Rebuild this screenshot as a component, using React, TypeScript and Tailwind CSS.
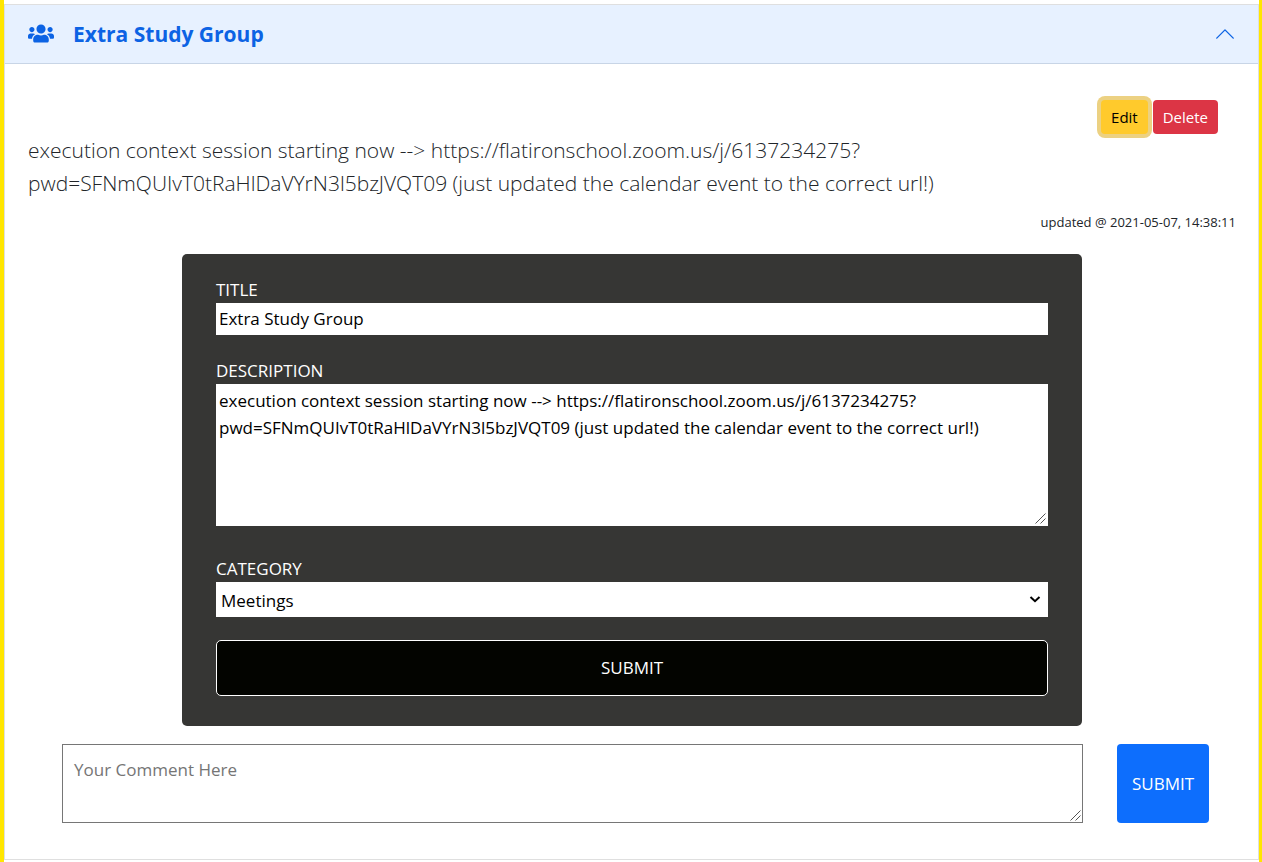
import { useState } from "react";
import type { TextareaHTMLAttributes } from "react";
import { FaUsers } from "react-icons/fa";
import { BsChevronUp } from "react-icons/bs";

const post = {
  title: "Extra Study Group",
  description:
    "execution context session starting now --> https://flatironschool.zoom.us/j/6137234275?pwd=SFNmQUIvT0tRaHlDaVYrN3l5bzJVQT09 (just updated the calendar event to the correct url!)",
  updated: "2021-05-07, 14:38:11",
};

function TextArea({ className, ...rest }: TextareaHTMLAttributes<HTMLTextAreaElement>) {
  return (
    <div className="relative flex min-w-0 grow">
      <textarea
        className={`w-full resize-y bg-white text-[17px] leading-[27px] outline-none [&::-webkit-resizer]:bg-transparent ${className}`}
        {...rest}
      />
      <svg
        className="pointer-events-none absolute right-0.5 bottom-0.5 size-[11px]"
        viewBox="0 0 11 11"
        fill="none"
        stroke="#555"
        aria-hidden="true"
      >
        <path d="M0.5 10.5 10.5 0.5M5.5 10.5 10.5 5.5" />
      </svg>
    </div>
  );
}

function EditForm() {
  const [title, setTitle] = useState(post.title);
  const [description, setDescription] = useState(post.description);
  return (
    <form
      className="mx-auto flex w-full max-w-[900px] flex-col rounded-[5px] bg-[#363634] px-[34px] pt-[22px] pb-[30px] text-[17px] leading-[27px] text-white"
      onSubmit={(e) => e.preventDefault()}
    >
      <label htmlFor="title">TITLE</label>
      <input
        id="title"
        className="h-8 w-full bg-white px-[3px] pb-0.5 text-black outline-none"
        value={title}
        onChange={(e) => setTitle(e.target.value)}
      />
      <label htmlFor="description" className="mt-[22px]">DESCRIPTION</label>
      <TextArea
        id="description"
        className="h-[142px] px-[3px] py-[3px] text-black"
        value={description}
        onChange={(e) => setDescription(e.target.value)}
      />
      <label htmlFor="category" className="mt-[29px]">CATEGORY</label>
      <div className="relative flex">
        <select id="category" className="h-[35px] w-full appearance-none bg-white pt-0.5 pl-[5px] text-black outline-none">
          <option>Meetings</option>
        </select>
        <svg
          className="pointer-events-none absolute top-[14px] right-[7px] h-[7px] w-3"
          viewBox="0 0 12 7"
          fill="none"
          stroke="#000"
          strokeWidth="2"
          aria-hidden="true"
        >
          <path d="M1.5 1 6 5.2 10.5 1" />
        </svg>
      </div>
      <button type="submit" className="mt-[23px] h-14 w-full rounded-[5px] border border-white bg-[#030400] pb-0.5">
        SUBMIT
      </button>
    </form>
  );
}

export default function App() {
  return (
    <div className="min-h-screen border-r-[3px] border-l-4 border-[#ffe600] bg-white pt-1 font-['Open_Sans','Noto_Sans',sans-serif] text-[#212529]">
      <section className="border border-[#dfdfdf]">
        <h2>
          <button
            type="button"
            aria-expanded="true"
            className="flex h-[59px] w-full items-center border-b border-[#c8d5e6] bg-[#e7f1ff] px-[22px] text-left text-[21px] font-bold text-[#0c63e4]"
          >
            <FaUsers className="mr-[19px] mb-0.5 ml-px h-[21px] w-[26px]" aria-hidden="true" />
            <span className="grow pt-0.5">{post.title}</span>
            <BsChevronUp className="size-[22px]" aria-hidden="true" />
          </button>
        </h2>
        <div className="pt-9 pr-[22px] pb-9 pl-[23px]">
          <div className="mr-[18px] flex justify-end gap-[5px] text-[15px] leading-[34px]">
            <button type="button" className="h-[34px] rounded bg-[#ffca2c] px-[10px] text-black ring-4 ring-[#ecd182]">
              Edit
            </button>
            <button type="button" className="h-[34px] rounded bg-[#dc3545] px-[10px] text-white">
              Delete
            </button>
          </div>
          <p className="text-[21px] leading-[33px] font-light break-words">{post.description}</p>
          <p className="mt-[10px] mb-5 text-right text-[13px] leading-6">updated @ {post.updated}</p>
          <EditForm />
          <form className="mt-[18px] mr-[27px] ml-[34px] flex gap-[34px]" onSubmit={(e) => e.preventDefault()}>
            <TextArea
              aria-label="Your Comment Here"
              placeholder="Your Comment Here"
              className="h-[79px] border border-[#767676] px-[11px] py-[11px] placeholder:text-[#757575]"
            />
            <button type="submit" className="h-[79px] w-[92px] shrink-0 rounded bg-[#0d6efd] text-[17px] text-white">
              SUBMIT
            </button>
          </form>
        </div>
      </section>
    </div>
  );
}
